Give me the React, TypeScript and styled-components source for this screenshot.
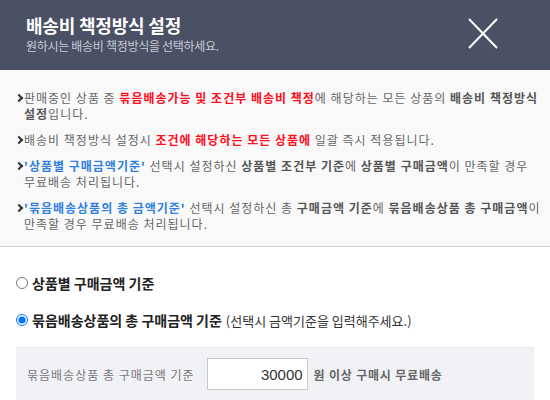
import React, { useState } from "react";
import styled, { createGlobalStyle } from "styled-components";

const colors = {
  header: "#4a5164",
  text: "#666",
  strong: "#555",
  red: "#ff0d1d",
  blue: "#2f7fe0",
  dark: "#222",
};

const GlobalStyle = createGlobalStyle`
  body {
    margin: 0;
    background: #fff;
    font-family: "Noto Sans CJK KR", "Noto Sans", sans-serif;
  }
`;

const Header = styled.header`
  height: 70px;
  background: ${colors.header};
  display: flex;
  justify-content: space-between;
  align-items: flex-start;
  padding: 0 52px 0 26px;
  box-sizing: border-box;
  .title {
    margin-top: 13px;
    font-size: 18px;
    line-height: 25px;
    font-weight: 700;
    color: #fff;
    letter-spacing: -0.2px;
  }
  .sub {
    font-size: 12px;
    line-height: 16px;
    color: #c9ccd4;
    letter-spacing: -0.3px;
  }
`;

const CloseButton = styled.button`
  margin-top: 18px;
  width: 30px;
  height: 31px;
  padding: 0;
  border: 0;
  background: transparent;
  cursor: pointer;
`;

const Notice = styled.ul`
  margin: 0;
  list-style: none;
  background: #f9f9f9;
  border-bottom: 1px solid #cfcfcf;
  padding: 20px 4px 14px 16px;
  display: flex;
  flex-direction: column;
  gap: 10px;
`;

const NoticeItem = styled.li`
  position: relative;
  padding-left: 8px;
  font-size: 12px;
  line-height: 16px;
  color: ${colors.text};
  word-break: keep-all;
  letter-spacing: 1px;
  &::before {
    content: "";
    position: absolute;
    left: 0;
    top: 5px;
    width: 4px;
    height: 4px;
    border-top: 2px solid #333;
    border-right: 2px solid #333;
    transform: rotate(45deg);
  }
  b {
    color: ${colors.strong};
  }
  .red {
    color: ${colors.red};
  }
  .blue {
    color: ${colors.blue};
  }
`;

const Options = styled.div`
  padding: 26px 16px 0;
`;

const RadioRow = styled.label`
  display: flex;
  align-items: center;
  height: 20px;
  margin-bottom: 17px;
  font-size: 14px;
  font-weight: 700;
  color: ${colors.dark};
  cursor: pointer;
  input {
    margin: 0 4px 0 0;
    width: 12px;
    height: 12px;
  }
  span {
    margin-left: 4px;
    font-size: 13px;
    font-weight: 400;
    color: #333;
  }
`;

const AmountBox = styled.div`
  margin-top: 8px;
  height: 52px;
  background: #f1f2f5;
  border-top: 1px solid #e8e9ec;
  display: flex;
  align-items: center;
  padding: 0 11px;
  font-size: 12px;
  color: #777;
  letter-spacing: 1px;
  input {
    margin: 0 6px 0 12px;
    width: 101px;
    height: 32px;
    box-sizing: border-box;
    border: 1px solid #c8c8c8;
    background: #fff;
    text-align: right;
    padding: 0 4px;
    font-family: "Liberation Sans", sans-serif;
    font-size: 15px;
    color: #333;
  }
  b {
    color: #666;
    letter-spacing: 0.8px;
  }
`;

const App: React.FC = () => {
  const [mode, setMode] = useState("bundle");
  const [amount, setAmount] = useState("30000");
  return (
    <>
      <GlobalStyle />
      <Header>
        <div>
          <div className="title">배송비 책정방식 설정</div>
          <div className="sub">원하시는 배송비 책정방식을 선택하세요.</div>
        </div>
        <CloseButton aria-label="닫기">
          <svg width="30" height="31" viewBox="0 0 30 31">
            <path d="M1 1L29 30M29 1L1 30" stroke="#fff" strokeWidth="2" />
          </svg>
        </CloseButton>
      </Header>
      <Notice>
        <NoticeItem>
          판매중인 상품 중 <b className="red">묶음배송가능 및 조건부 배송비 책정</b>에 해당하는 모든 상품의{" "}
          <b>배송비 책정방식 설정</b>입니다.
        </NoticeItem>
        <NoticeItem>
          배송비 책정방식 설정시 <b className="red">조건에 해당하는 모든 상품에</b> 일괄 즉시 적용됩니다.
        </NoticeItem>
        <NoticeItem>
          <b className="blue">'상품별 구매금액기준'</b> 선택시 설정하신 <b>상품별 조건부 기준</b>에{" "}
          <b>상품별 구매금액</b>이 만족할 경우 무료배송 처리됩니다.
        </NoticeItem>
        <NoticeItem>
          <b className="blue">'묶음배송상품의 총 금액기준'</b> 선택시 설정하신 총 <b>구매금액 기준</b>에{" "}
          <b>묶음배송상품 총 구매금액</b>이 만족할 경우 무료배송 처리됩니다.
        </NoticeItem>
      </Notice>
      <Options>
        <RadioRow>
          <input type="radio" name="mode" checked={mode === "item"} onChange={() => setMode("item")} />
          상품별 구매금액 기준
        </RadioRow>
        <RadioRow>
          <input type="radio" name="mode" checked={mode === "bundle"} onChange={() => setMode("bundle")} />
          묶음배송상품의 총 구매금액 기준<span>(선택시 금액기준을 입력해주세요.)</span>
        </RadioRow>
        <AmountBox>
          묶음배송상품 총 구매금액 기준
          <input value={amount} onChange={(e) => setAmount(e.target.value)} />
          <b>원 이상 구매시 무료배송</b>
        </AmountBox>
      </Options>
    </>
  );
};

export default App;
